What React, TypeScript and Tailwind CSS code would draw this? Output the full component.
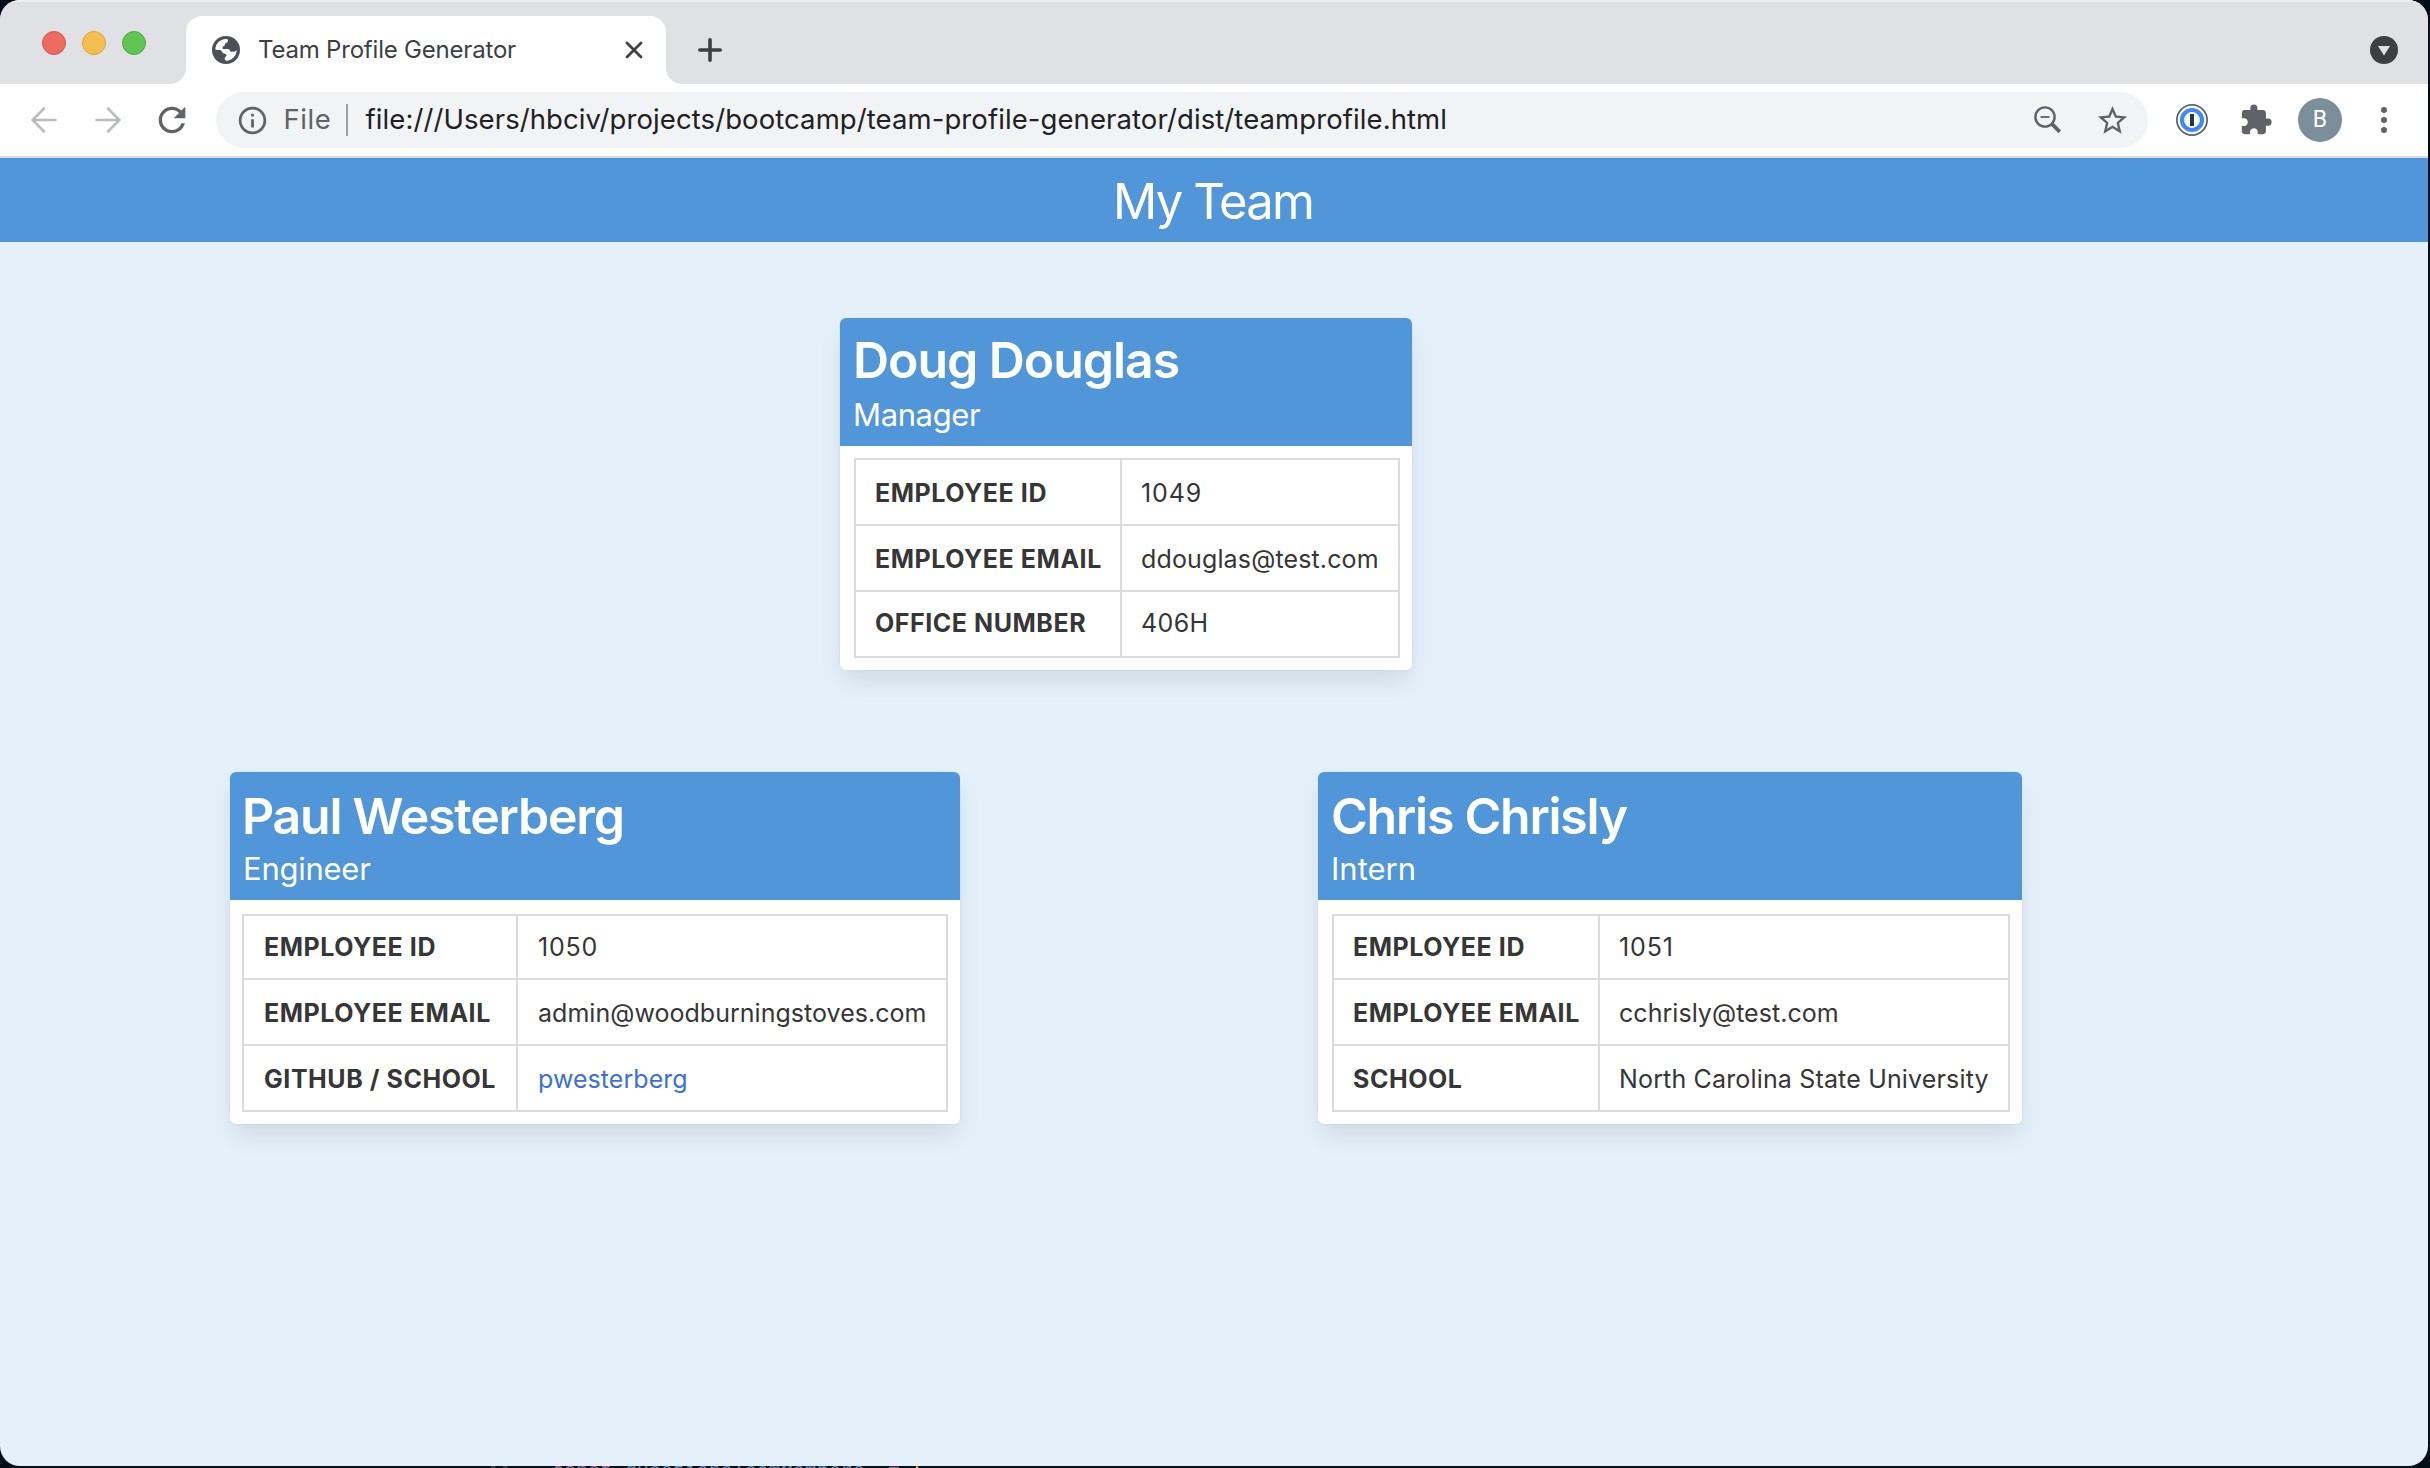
import type { ReactNode } from "react";
import { MdExtension, MdInfoOutline, MdRefresh, MdStarBorder } from "react-icons/md";

type Row = { label: string; value: ReactNode; className: string; textClass: string };

type Member = {
  name: string;
  role: string;
  cardClass: string;
  nameClass: string;
  roleClass: string;
  tableClass: string;
  labelClass: string;
  valueClass: string;
  rows: Row[];
};

const manager: Member = {
  name: "Doug Douglas",
  role: "Manager",
  cardClass: "ml-[840px] w-[572px]",
  nameClass: "pt-[12px] pl-[13px] tracking-[-1.05px]",
  roleClass: "mt-[5px] pl-[13px] tracking-[-0.37px]",
  tableClass: "mt-[12px] ml-[14px] w-[546px]",
  labelClass: "w-[266px] pl-[19px]",
  valueClass: "pl-[19px]",
  rows: [
    { label: "EMPLOYEE ID", value: "1049", className: "h-[64px] pt-[3px]", textClass: "tracking-[0.9px]" },
    { label: "EMPLOYEE EMAIL", value: "ddouglas@test.com", className: "h-[64px] pt-[3px]", textClass: "tracking-[0.14px]" },
    { label: "OFFICE NUMBER", value: "406H", className: "h-[64px] pt-[1px]", textClass: "tracking-[0.4px]" },
  ],
};

const engineer: Member = {
  name: "Paul Westerberg",
  role: "Engineer",
  cardClass: "w-[730px]",
  nameClass: "pt-[14px] pl-[12px] tracking-[-1.25px]",
  roleClass: "mt-[3px] pl-[13px] tracking-[-0.25px]",
  tableClass: "mt-[14px] ml-[12px] w-[706px]",
  labelClass: "w-[274px] pl-[20px]",
  valueClass: "pl-[20px]",
  rows: [
    { label: "EMPLOYEE ID", value: "1050", className: "h-[62px] pt-[1px]", textClass: "tracking-[0.8px]" },
    {
      label: "EMPLOYEE EMAIL",
      value: "admin@woodburningstoves.com",
      className: "h-[64px] pt-[3px]",
      textClass: "tracking-[0.03px]",
    },
    {
      label: "GITHUB / SCHOOL",
      value: (
        <a href="#" className="text-[#3d6fdb]">
          pwesterberg
        </a>
      ),
      className: "h-[64px] pt-[3px]",
      textClass: "tracking-[0.05px]",
    },
  ],
};

const intern: Member = {
  name: "Chris Chrisly",
  role: "Intern",
  cardClass: "w-[704px]",
  nameClass: "pt-[14px] pl-[13px] tracking-[-1.25px]",
  roleClass: "mt-[3px] pl-[13px]",
  tableClass: "mt-[14px] ml-[14px] w-[678px]",
  labelClass: "w-[266px] pl-[19px]",
  valueClass: "pl-[19px]",
  rows: [
    { label: "EMPLOYEE ID", value: "1051", className: "h-[62px] pt-[1px]", textClass: "tracking-[0.9px]" },
    { label: "EMPLOYEE EMAIL", value: "cchrisly@test.com", className: "h-[64px] pt-[3px]", textClass: "tracking-[0.04px]" },
    {
      label: "SCHOOL",
      value: "North Carolina State University",
      className: "h-[64px] pt-[3px]",
      textClass: "tracking-[0.16px]",
    },
  ],
};

function Card({ member }: { member: Member }) {
  return (
    <article
      className={`h-[352px] shrink-0 overflow-hidden rounded-[6px] bg-white shadow-[0_13px_26px_-3px_rgba(10,10,10,0.1),0_0_0_1px_rgba(10,10,10,0.02)] ${member.cardClass}`}
    >
      <header className="h-[128px] bg-[#5096d8] text-white">
        <h2 className={`text-[50px] leading-[60px] font-semibold ${member.nameClass}`}>
          {member.name}
        </h2>
        <p className={`text-[31px] leading-[40px] ${member.roleClass}`}>{member.role}</p>
      </header>
      <div
        className={`border-2 border-b-0 border-[#dbdbdb] text-[25px] leading-[60px] text-[#363636] ${member.tableClass}`}
      >
        {member.rows.map((row) => (
          <div key={row.label} className="flex border-b-2 border-[#dbdbdb]">
            <div
              className={`shrink-0 border-r-2 border-[#dbdbdb] font-bold tracking-[0.55px] ${member.labelClass} ${row.className}`}
            >
              {row.label}
            </div>
            <div className={`grow ${member.valueClass} ${row.className} ${row.textClass}`}>
              {row.value}
            </div>
          </div>
        ))}
      </div>
    </article>
  );
}

function ArrowIcon({ className }: { className: string }) {
  return (
    <svg
      viewBox="0 0 26 26"
      className={className}
      fill="none"
      stroke="#babcbe"
      strokeWidth="2.6"
      strokeLinecap="round"
    >
      <path d="M24.5 13H2M13 1.5L1.6 13L13 24.5" />
    </svg>
  );
}

function GlobeIcon({ className }: { className: string }) {
  return (
    <svg viewBox="0 0 28 28" className={className}>
      <circle cx="14" cy="14" r="14" fill="#4d5056" />
      <path
        fill="#fff"
        d="M3.4 13.8C3.3 8 7.8 3.3 14 3.1L16 3.5C16 6 15.2 7.2 13 7.4C13 9.4 12.2 10.2 10.6 10.4V13H16C18 13 18.2 15.4 18.6 15.7H21.5C23.4 15.7 24.3 14.8 24.7 13.8C24.7 19.4 20.8 24 15.2 24.7C13.2 24.8 12.2 23.6 12.8 21.8C13.2 20.8 14.6 20.4 14.4 19C14.2 17.2 11.2 18 10.4 16.2C9.8 14.6 8.6 14 7 14Z"
      />
    </svg>
  );
}

function TabStrip() {
  return (
    <div className="flex h-[84px] items-start border-t-2 border-[#eceef0] bg-[#dfe1e5]">
      <div className="mt-[29px] ml-[42px] flex gap-4">
        <span className="size-6 rounded-full border border-[#d9564b] bg-[#ed6b5f]" />
        <span className="size-6 rounded-full border border-[#dca43a] bg-[#f5bf4f]" />
        <span className="size-6 rounded-full border border-[#52ab43] bg-[#61c554]" />
      </div>
      <svg viewBox="0 0 16 16" className="mt-[66px] ml-[24px] size-4 shrink-0" fill="#fff">
        <path d="M16 0V16H0A16 16 0 0 0 16 0Z" />
      </svg>
      <div className="mt-[14px] flex h-[68px] w-[480px] shrink-0 items-center rounded-t-[16px] bg-white">
        <GlobeIcon className="ml-[26px] size-7" />
        <span className="ml-[18px] text-[24px] tracking-[-0.2px] text-[#3c4043]">
          Team Profile Generator
        </span>
        <svg
          viewBox="0 0 18 18"
          className="mr-[23px] ml-auto size-[18px]"
          stroke="#3c4043"
          strokeWidth="2.8"
          strokeLinecap="round"
        >
          <path d="M2 2L16 16M16 2L2 16" />
        </svg>
      </div>
      <svg viewBox="0 0 16 16" className="mt-[66px] size-4 shrink-0" fill="#fff">
        <path d="M0 0V16H16A16 16 0 0 1 0 0Z" />
      </svg>
      <svg
        viewBox="0 0 24 24"
        className="mt-[36px] ml-[16px] size-6"
        stroke="#3c4043"
        strokeWidth="3.6"
        strokeLinecap="round"
      >
        <path d="M12 1.8V22.2M1.8 12H22.2" />
      </svg>
      <svg viewBox="0 0 28 28" className="mt-[34px] mr-[30px] ml-auto size-7">
        <circle cx="14" cy="14" r="14" fill="#3c4043" />
        <path d="M8 10H20L14 19.5Z" fill="#dfe1e5" />
      </svg>
    </div>
  );
}

function Toolbar() {
  return (
    <div className="flex h-[74px] items-center border-b-2 border-[#d9dadb] bg-white">
      <ArrowIcon className="ml-[31px] size-[26px]" />
      <ArrowIcon className="ml-[38px] size-[26px] rotate-180" />
      <MdRefresh className="ml-[31px] size-[40px] text-[#5f6368]" />
      <div className="ml-[24px] flex h-[56px] w-[1932px] items-center rounded-full bg-[#f1f3f4]">
        <MdInfoOutline className="ml-[20px] size-[33px] text-[#5f6368]" />
        <span className="ml-[14.5px] w-[47px] text-[27.5px] tracking-[0.6px] text-[#5f6368]">
          File
        </span>
        <span className="ml-[15px] h-8 w-[2px] bg-[#9aa0a6]" />
        <span className="ml-[18px] text-[27.5px] tracking-[0.09px] whitespace-nowrap text-[#202124]">
          file:///Users/hbciv/projects/bootcamp/team-profile-generator/dist/teamprofile.html
        </span>
        <svg viewBox="0 0 28 28" className="ml-auto size-7" fill="none" stroke="#5f6368">
          <circle cx="11" cy="11" r="9.6" strokeWidth="2.4" />
          <path d="M6.5 11H15.5" strokeWidth="1.8" />
          <path d="M18.2 18.2L25.8 25.8" strokeWidth="3.8" />
        </svg>
        <MdStarBorder className="mr-[18px] ml-[33px] size-[35px] text-[#5f6368]" />
      </div>
      <svg viewBox="0 0 32 32" className="ml-[28px] size-8">
        <circle cx="16" cy="16" r="15.1" fill="#fff" stroke="#636569" strokeWidth="1.8" />
        <circle cx="16" cy="16" r="10" fill="#fff" stroke="#3f8af8" strokeWidth="4.2" />
        <rect x="14" y="10" width="4" height="12" fill="#333" />
      </svg>
      <MdExtension className="ml-[31px] size-[34px] text-[#5f6368]" />
      <div className="ml-[25px] flex size-[44px] items-center justify-center rounded-full bg-[#7b8f9b] font-[Roboto] text-[23px] text-white">
        B
      </div>
      <div className="ml-[39px] flex flex-col gap-1">
        <span className="size-1.5 rounded-full bg-[#5f6368]" />
        <span className="size-1.5 rounded-full bg-[#5f6368]" />
        <span className="size-1.5 rounded-full bg-[#5f6368]" />
      </div>
    </div>
  );
}

export default function App() {
  return (
    <div className="h-[1468px] w-[2430px] overflow-hidden bg-[#020d18] font-[Inter,sans-serif]">
      <div className="h-[1466px] w-[2428px] overflow-hidden rounded-[20px] bg-[#e4f0fa]">
        <TabStrip />
        <Toolbar />
        <h1 className="h-[84px] bg-[#5096d8] pt-[2px] pr-[2px] text-center text-[49px] leading-[84px] font-normal tracking-[-1.9px] text-white">
          My Team
        </h1>
        <main className="pt-[76px]">
          <Card member={manager} />
          <div className="mt-[102px] ml-[230px] flex gap-[358px]">
            <Card member={engineer} />
            <Card member={intern} />
          </div>
        </main>
      </div>
      <div className="flex h-[2px] overflow-hidden pl-[486px] font-['Liberation_Mono'] text-[20px] leading-[11px] whitespace-pre">
        <span className="text-[#3f4a55]">44</span>
        <span className="ml-[42px] text-[#9a68b0]">const</span>
        <span className="ml-[12px] w-[252px] text-[#6384c9] italic">questionsTeamMembers</span>
        <span className="ml-[12px] text-[#9a68b0]">=</span>
        <span className="ml-[12px] text-[#d8c81c]">[</span>
      </div>
    </div>
  );
}
